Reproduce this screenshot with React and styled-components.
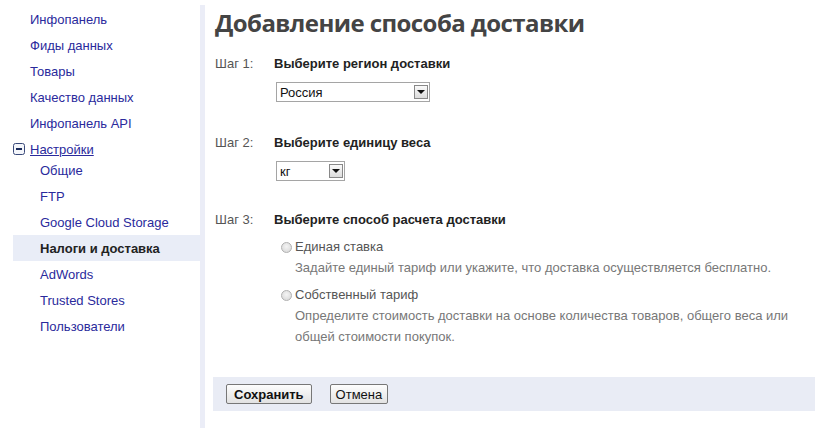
import React from 'react'
import styled, { createGlobalStyle } from 'styled-components'

const GlobalStyle = createGlobalStyle`
  body {
    margin: 0;
    background: #fff;
    font-family: Arial, "Liberation Sans", sans-serif;
    font-size: 13px;
  }
`

const Page = styled.div`
  display: flex;
  width: 838px;
  height: 428px;
  overflow: hidden;
`

const Sidebar = styled.nav`
  width: 187px;
  padding: 6px 0 0 13px;
  flex-shrink: 0;
`

const NavItem = styled.a`
  display: flex;
  align-items: center;
  height: 26px;
  padding-left: ${p => (p.$sub ? 27 : 17)}px;
  color: ${p => (p.$active ? '#222' : '#2a2a9c')};
  font-weight: ${p => (p.$active ? 'bold' : 'normal')};
  background: ${p => (p.$active ? '#e9edf7' : 'transparent')};
  text-decoration: none;
  white-space: nowrap;
`

const GroupHead = styled.a`
  display: flex;
  align-items: center;
  gap: 5px;
  height: 26px;
  color: #2a2a9c;
  text-decoration: underline;
`

const SubList = styled.div`
  margin-top: -5px;
`

const Divider = styled.div`
  width: 5px;
  margin-top: 5px;
  background: #ebedf7;
  flex-shrink: 0;
`

const Main = styled.main`
  flex: 1;
  padding: 6px 23px 0 5px;
`

const Title = styled.h1`
  margin: 0 0 0 5px;
  font-family: "Open Sans", sans-serif;
  font-weight: bold;
  font-size: 24px;
  line-height: 34px;
  color: #444;
  letter-spacing: -0.57px;
`

const Step = styled.section`
  display: grid;
  grid-template-columns: 59px 1fr;
  margin: ${p => p.$top}px 0 0 5px;
`

const StepLabel = styled.div`
  color: #555;
  line-height: 16px;
`

const StepTitle = styled.div`
  font-weight: bold;
  color: #222;
  line-height: 16px;
`

const StepBody = styled.div`
  grid-column: 2;
  padding-left: 2px;
`

const Select = styled.div`
  display: flex;
  align-items: center;
  justify-content: space-between;
  width: ${p => p.$width}px;
  height: 20px;
  box-sizing: border-box;
  border: 1px solid #a5a5a5;
  padding: 0 1px 0 3px;
  margin-top: ${p => p.$top}px;
  color: #111;
  background: #fff;
`

const Arrow = styled.span`
  width: 14px;
  height: 14px;
  box-sizing: border-box;
  border: 1px solid #888;
  background: linear-gradient(#fafafa, #dcdcdc);
  display: flex;
  align-items: center;
  justify-content: center;
  &::after {
    content: '';
    border-left: 4px solid transparent;
    border-right: 4px solid transparent;
    border-top: 4px solid #111;
  }
`

const Option = styled.div`
  margin-top: ${p => p.$top}px;
  padding-left: 5px;
`

const OptionLabel = styled.label`
  display: flex;
  align-items: center;
  gap: 3px;
  color: #555;
  line-height: 16px;
`

const Radio = styled.span`
  width: 11px;
  height: 11px;
  border-radius: 50%;
  border: 1px solid #b0b0b0;
  background: radial-gradient(circle at 50% 40%, #f4f4f4, #d4d4d4);
  box-sizing: border-box;
`

const OptionHint = styled.p`
  margin: 2px 0 0 14px;
  color: #777;
  line-height: 21px;
  max-width: 500px;
`

const Footer = styled.div`
  display: flex;
  align-items: center;
  gap: 18px;
  height: 34px;
  margin: 30px 0 0 3px;
  padding-left: 13px;
  background: #e9ecf5;
`

const Button = styled.button`
  height: 20px;
  padding: 0 ${p => (p.$primary ? 7 : 5)}px;
  font-family: Arial, "Liberation Sans", sans-serif;
  font-size: 13px;
  font-weight: ${p => (p.$primary ? 'bold' : 'normal')};
  color: #111;
  border: 1px solid #777;
  border-radius: 2px;
  background: linear-gradient(#fdfdfd, #e2e2e2);
`

const MinusIcon = () => (
  <svg width="12" height="12" viewBox="0 0 12 12">
    <rect x="0.5" y="0.5" width="11" height="11" rx="2" fill="#f4f6fb" stroke="#3a4a7a" />
    <rect x="3" y="5" width="6" height="2" fill="#1a2a5a" />
  </svg>
)

const topItems = ['Инфопанель', 'Фиды данных', 'Товары', 'Качество данных', 'Инфопанель API']
const subItems = ['Общие', 'FTP', 'Google Cloud Storage', 'Налоги и доставка', 'AdWords', 'Trusted Stores', 'Пользователи']

export default function App() {
  return (
    <Page>
      <GlobalStyle />
      <Sidebar>
        {topItems.map(t => (
          <NavItem key={t}>{t}</NavItem>
        ))}
        <GroupHead>
          <MinusIcon />
          Настройки
        </GroupHead>
        <SubList>
          {subItems.map(t => (
            <NavItem key={t} $sub $active={t === 'Налоги и доставка'}>
              {t}
            </NavItem>
          ))}
        </SubList>
      </Sidebar>
      <Divider />
      <Main>
        <Title>Добавление способа доставки</Title>
        <Step $top={16}>
          <StepLabel>Шаг 1:</StepLabel>
          <StepTitle>Выберите регион доставки</StepTitle>
          <StepBody>
            <Select $width={154} $top={10}>
              Россия
              <Arrow />
            </Select>
          </StepBody>
        </Step>
        <Step $top={33}>
          <StepLabel>Шаг 2:</StepLabel>
          <StepTitle>Выберите единицу веса</StepTitle>
          <StepBody>
            <Select $width={69} $top={10}>
              кг
              <Arrow />
            </Select>
          </StepBody>
        </Step>
        <Step $top={31}>
          <StepLabel>Шаг 3:</StepLabel>
          <StepTitle>Выберите способ расчета доставки</StepTitle>
          <StepBody>
            <Option $top={11}>
              <OptionLabel>
                <Radio />
                Единая ставка
              </OptionLabel>
              <OptionHint>Задайте единый тариф или укажите, что доставка осуществляется бесплатно.</OptionHint>
            </Option>
            <Option $top={9}>
              <OptionLabel>
                <Radio />
                Собственный тариф
              </OptionLabel>
              <OptionHint>
                Определите стоимость доставки на основе количества товаров, общего веса или общей стоимости покупок.
              </OptionHint>
            </Option>
          </StepBody>
        </Step>
        <Footer>
          <Button $primary>Сохранить</Button>
          <Button>Отмена</Button>
        </Footer>
      </Main>
    </Page>
  )
}
